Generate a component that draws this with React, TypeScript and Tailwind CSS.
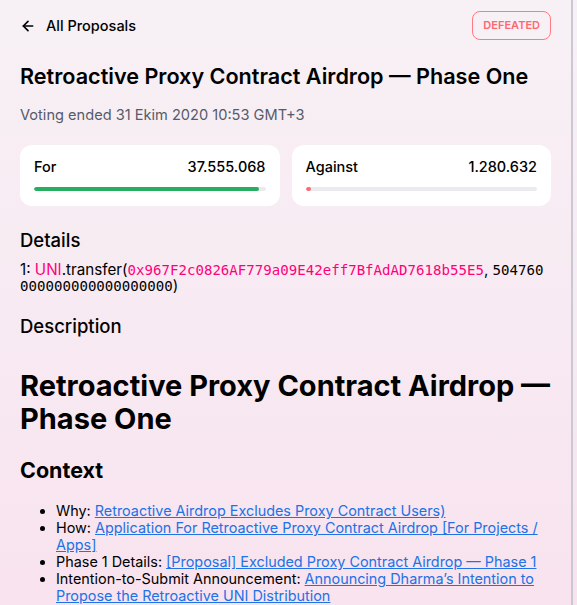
import React from "react";

const inter = { fontFamily: "Inter, 'Noto Sans', sans-serif" };
const mono = { fontFamily: "'DejaVu Sans Mono', monospace" };

function ArrowLeft() {
  return (
    <svg width="16" height="16" viewBox="0 0 24 24" fill="none" stroke="#000" strokeWidth="2.5" strokeLinecap="round" strokeLinejoin="round">
      <line x1="19" y1="12" x2="5" y2="12" />
      <polyline points="12 19 5 12 12 5" />
    </svg>
  );
}

function VoteCard({ label, value, pct, color }: { label: string; value: string; pct: number; color: string }) {
  return (
    <div className="flex-1 bg-white rounded-[12px] px-[14px] pt-[13px] pb-[15px]">
      <div className="flex justify-between items-center text-[14.5px] font-medium text-black leading-[18px]">
        <span>{label}</span>
        <span>{value}</span>
      </div>
      <div className="mt-[11px] h-[4px] rounded-full bg-[#ebebef] overflow-hidden">
        <div className={`h-full rounded-full ${color}`} style={{ width: `${pct}%` }} />
      </div>
    </div>
  );
}

export default function App() {
  return (
    <div className="w-[577px] h-[605px] overflow-hidden bg-gradient-to-b from-[#f7f1f5] to-[#f8e3ef]" style={inter}>
      <div className="w-[573px] h-full border-r-2 border-[#c8c8d6] pl-[20px] pr-[20px] text-black">
        <div className="flex items-center justify-between pt-[11px] h-[40px]">
          <div className="flex items-center gap-[10px] text-[14.5px] font-medium">
            <ArrowLeft />
            <span>All Proposals</span>
          </div>
          <div className="h-[29px] px-[10px] flex items-center rounded-[8px] border border-[#ff7a82] text-[#ff6871] text-[11px] font-semibold">
            DEFEATED
          </div>
        </div>
        <h1 className="mt-[23px] text-[21.6px] font-semibold leading-[26px] whitespace-nowrap">Retroactive Proxy Contract Airdrop — Phase One</h1>
        <div className="mt-[17px] text-[14.6px] text-[#565a69] leading-[18px]">Voting ended 31 Ekim 2020 10:53 GMT+3</div>
        <div className="mt-[21px] flex gap-[12px]">
          <VoteCard label="For" value="37.555.068" pct={97} color="bg-[#27ae60]" />
          <VoteCard label="Against" value="1.280.632" pct={2.5} color="bg-[#ff6871]" />
        </div>
        <h3 className="mt-[23px] text-[18.5px] font-medium leading-[22px]">Details</h3>
        <div className="mt-[11px] pr-[4px] text-[15.2px] leading-[16px] break-all">
          1: <span className="text-[#ff007a]">UNI</span>.transfer(
          <span className="text-[#ff007a] text-[14.1px]" style={mono}>0x967F2c0826AF779a09E42eff7BfAdAD7618b55E5</span>,{" "}
          <span className="text-[14.1px]" style={mono}>504760000000000000000000</span>)
        </div>
        <h3 className="mt-[21px] text-[18.5px] font-medium leading-[22px]">Description</h3>
        <h1 className="mt-[32px] text-[29px] font-bold leading-[33px]">Retroactive Proxy Contract Airdrop — Phase One</h1>
        <h2 className="mt-[22px] text-[21.5px] font-bold leading-[26px]">Context</h2>
        <ul className="mt-[19px] list-disc pl-[36px] text-[14.4px] leading-[17px]">
          <li>Why: <a className="text-[#2172e5] underline">Retroactive Airdrop Excludes Proxy Contract Users)</a></li>
          <li>How: <a className="text-[#2172e5] underline">Application For Retroactive Proxy Contract Airdrop [For Projects / Apps]</a></li>
          <li>Phase 1 Details: <a className="text-[#2172e5] underline">[Proposal] Excluded Proxy Contract Airdrop — Phase 1</a></li>
          <li>Intention-to-Submit Announcement: <a className="text-[#2172e5] underline">Announcing Dharma’s Intention to Propose the Retroactive UNI Distribution</a></li>
        </ul>
      </div>
    </div>
  );
}
